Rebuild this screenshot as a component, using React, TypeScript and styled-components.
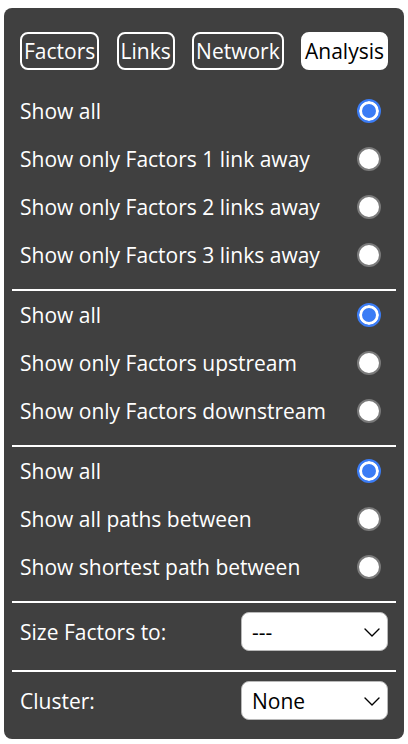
import React, { useState } from 'react';
import styled, { createGlobalStyle } from 'styled-components';

const GlobalStyle = createGlobalStyle`
  body {
    margin: 0;
    background: #ffffff;
    font-family: 'Open Sans', 'Noto Sans', sans-serif;
  }
`;

const Panel = styled.div`
  width: 400px;
  margin: 8px 4px 6px;
  box-sizing: border-box;
  padding: 24px 8px 0;
  background: #404040;
  border-radius: 8px;
  color: #ffffff;
`;

const Tabs = styled.div`
  display: flex;
  justify-content: space-between;
  padding: 0 8px 17px;
`;

const Tab = styled.button<{ $active?: boolean }>`
  height: 38px;
  padding: 0 2px;
  border: 2px solid #ffffff;
  border-radius: 8px;
  background: ${({ $active }) => ($active ? '#ffffff' : 'transparent')};
  color: ${({ $active }) => ($active ? '#000000' : '#ffffff')};
  font-family: inherit;
  font-size: 21px;
  cursor: pointer;
`;

const Section = styled.div`
  padding-bottom: 10px;
  border-bottom: 2px solid #ffffff;
`;

const Row = styled.label`
  display: flex;
  align-items: center;
  justify-content: space-between;
  height: 48px;
  padding: 0 15px 0 8px;
  font-size: 21px;
  cursor: pointer;
`;

const Radio = styled.span<{ $checked?: boolean }>`
  box-sizing: border-box;
  width: 24px;
  height: 24px;
  border-radius: 50%;
  background: ${({ $checked }) => ($checked ? '#3b7cf5' : '#ffffff')};
  border: ${({ $checked }) => ($checked ? '2px solid #3b7cf5' : '2px solid #7a7a7a')};
  box-shadow: ${({ $checked }) => ($checked ? 'inset 0 0 0 3px #ffffff' : 'none')};
`;

const SelectRow = styled.div<{ $last?: boolean }>`
  display: flex;
  align-items: center;
  justify-content: space-between;
  padding: 9px 8px 19px;
  font-size: 21px;
  line-height: 28px;
  border-bottom: ${({ $last }) => ($last ? 'none' : '2px solid #ffffff')};
`;

const SelectBox = styled.div`
  box-sizing: border-box;
  display: flex;
  align-items: center;
  justify-content: space-between;
  width: 147px;
  height: 39px;
  padding: 0 6px 0 10px;
  background: #ffffff;
  border: 1px solid #b8b8b8;
  border-radius: 8px;
  color: #000000;
  font-size: 21px;
`;

const groups = [
  ['Show all', 'Show only Factors 1 link away', 'Show only Factors 2 links away', 'Show only Factors 3 links away'],
  ['Show all', 'Show only Factors upstream', 'Show only Factors downstream'],
  ['Show all', 'Show all paths between', 'Show shortest path between'],
];

const Chevron = () => (
  <svg width="18" height="18" viewBox="0 0 18 18" fill="none">
    <path d="M2 6l7 7 7-7" stroke="#000" strokeWidth="1.4" strokeLinecap="round" strokeLinejoin="round" />
  </svg>
);

export default function App() {
  const [picked, setPicked] = useState([0, 0, 0]);
  return (
    <>
      <GlobalStyle />
      <Panel>
        <Tabs>
          <Tab>Factors</Tab>
          <Tab>Links</Tab>
          <Tab>Network</Tab>
          <Tab $active>Analysis</Tab>
        </Tabs>
        {groups.map((items, g) => (
          <Section key={g}>
            {items.map((text, i) => (
              <Row key={text} onClick={() => setPicked(p => p.map((v, k) => (k === g ? i : v)))}>
                {text}
                <Radio $checked={picked[g] === i} />
              </Row>
            ))}
          </Section>
        ))}
        <SelectRow>
          Size Factors to:
          <SelectBox>
            ---
            <Chevron />
          </SelectBox>
        </SelectRow>
        <SelectRow $last>
          Cluster:
          <SelectBox>
            None
            <Chevron />
          </SelectBox>
        </SelectRow>
      </Panel>
    </>
  );
}
